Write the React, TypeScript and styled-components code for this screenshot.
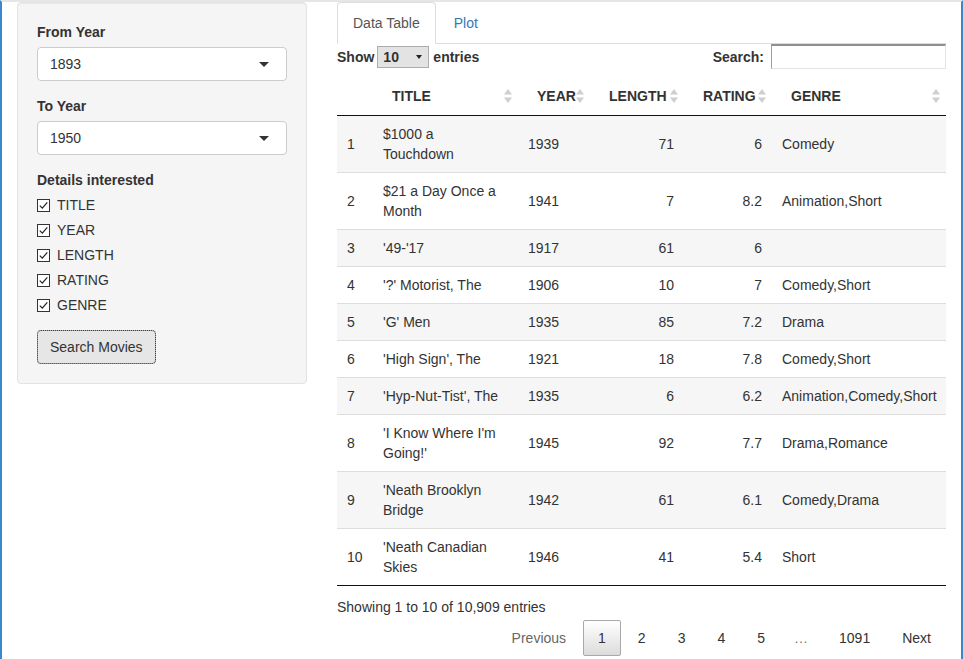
import React from "react";
import styled, { createGlobalStyle } from "styled-components";

const GlobalStyle = createGlobalStyle`
  html, body { margin: 0; padding: 0; background: #fff; }
  body {
    font-family: "Liberation Sans", Arial, Helvetica, sans-serif;
    font-size: 14px;
    line-height: 20px;
    color: #333;
  }
  * { box-sizing: border-box; }
`;

const Frame = styled.div`
  width: 963px;
  height: 659px;
  overflow: hidden;
  display: flex;
  align-items: flex-start;
  border-left: 2px solid #3c87cc;
  border-right: 2px solid #3c87cc;
  border-top: 2px solid #e6e6e6;
`;

const SideCol = styled.div`
  width: 320px;
  flex: none;
  padding: 0 15px;
`;

const MainCol = styled.div`
  flex: 1;
  min-width: 0;
  padding: 0 15px;
`;

const Well = styled.div`
  background: #f5f5f5;
  border: 1px solid #e3e3e3;
  border-radius: 4px;
  padding: 19px;
  box-shadow: inset 0 1px 1px rgba(0, 0, 0, 0.05);
`;

const FormGroup = styled.div`
  margin-bottom: 15px;
`;

const Label = styled.div`
  display: block;
  font-weight: 700;
  margin-bottom: 5px;
`;

const SelectBox = styled.div`
  height: 34px;
  background: #fff;
  border: 1px solid #ccc;
  border-radius: 4px;
  padding: 0 17px 0 12px;
  display: flex;
  align-items: center;
  justify-content: space-between;
`;

const Caret = styled.span`
  width: 0;
  height: 0;
  border-left: 5px solid transparent;
  border-right: 5px solid transparent;
  border-top: 5px solid #333;
  margin-top: 1px;
`;

const Options = styled.div`
  display: flex;
  flex-direction: column;
  gap: 5px;
`;

const OptionRow = styled.div`
  display: flex;
  align-items: center;
  height: 20px;
`;

const Box = styled.span`
  width: 13px;
  height: 13px;
  border: 1px solid #333;
  background: #fff;
  margin-right: 7px;
  display: flex;
  align-items: center;
  justify-content: center;
`;

const Button = styled.div`
  display: inline-flex;
  align-items: center;
  height: 34px;
  padding: 0 12px;
  background: #e6e6e6;
  border: 1px solid #adadad;
  border-radius: 4px;
  outline: 1px dotted #444;
  outline-offset: -1px;
  color: #333;
`;

const Tabs = styled.div`
  display: flex;
  border-bottom: 1px solid #ddd;
`;

const Tab = styled.div<{ $active?: boolean }>`
  padding: 10px 15px;
  margin-right: 2px;
  margin-bottom: -1px;
  border: 1px solid transparent;
  border-radius: 4px 4px 0 0;
  color: ${(p) => (p.$active ? "#555" : "#337ab7")};
  ${(p) =>
    p.$active
      ? `border-color: #ddd #ddd transparent; background: #fff;`
      : ``}
`;

const Controls = styled.div`
  display: flex;
  justify-content: space-between;
  align-items: center;
  height: 25px;
`;

const BoldLabel = styled.div`
  display: flex;
  align-items: center;
  font-weight: 700;
`;

const LenSelect = styled.div`
  width: 52px;
  height: 22px;
  margin: 1px 4px 0 3px;
  background: #e3e3e3;
  border: 1px solid #adadad;
  display: flex;
  align-items: center;
  justify-content: space-between;
  padding: 0 6px 0 5px;
  font-weight: 700;
`;

const SmallCaret = styled.span`
  width: 0;
  height: 0;
  border-left: 3.5px solid transparent;
  border-right: 3.5px solid transparent;
  border-top: 4px solid #222;
`;

const SearchInput = styled.div`
  width: 175px;
  height: 25px;
  margin-left: 7px;
  background: #fff;
  border-top: 2px solid #8f8f8f;
  border-left: 1px solid #a0a0a0;
  border-right: 1px solid #e3e3e3;
  border-bottom: 1px solid #e3e3e3;
`;

const Table = styled.table`
  width: 609px;
  margin-top: 9px;
  table-layout: fixed;
  border-collapse: separate;
  border-spacing: 0;
`;

const Th = styled.th<{ $plain?: boolean }>`
  padding: ${(p) => (p.$plain ? "8px 10px 9px" : "8px 6px 9px 19px")};
  text-align: left;
  font-weight: 700;
  border-bottom: 1px solid #111;
  line-height: 20px;
`;

const HeadInner = styled.div`
  display: flex;
  align-items: center;
  justify-content: space-between;
`;

const Tr = styled.tr<{ $odd: boolean }>`
  background: ${(p) => (p.$odd ? "#f6f6f6" : "#fff")};
  &:first-child td {
    border-top: none;
  }
  &:last-child td {
    border-bottom: 1px solid #111;
  }
`;

const Td = styled.td<{ $right?: boolean }>`
  padding: 8px 10px;
  vertical-align: middle;
  line-height: 20px;
  border-top: 1px solid #ddd;
  text-align: ${(p) => (p.$right ? "right" : "left")};
`;

const Info = styled.div`
  padding-top: 11px;
`;

const Pager = styled.div`
  margin-top: 3px;
  display: flex;
  justify-content: flex-end;
  align-items: center;
`;

const PageBtn = styled.div<{ $current?: boolean; $disabled?: boolean }>`
  padding: 7px 14px;
  margin-left: 2px;
  border: 1px solid ${(p) => (p.$current ? "#a9a9a9" : "transparent")};
  border-radius: 2px;
  color: ${(p) => (p.$disabled ? "#666" : "#333")};
  background: ${(p) =>
    p.$current ? "linear-gradient(to bottom, #fff 0%, #dcdcdc 100%)" : "transparent"};
`;

const Ellipsis = styled.span`
  padding: 0 14px;
  color: #777;
`;

const SortIcon = () => (
  <svg width="8" height="14" viewBox="0 0 8 14">
    <path d="M4 0 L8 5.5 L0 5.5 Z" fill="#cfcfcf" />
    <path d="M0 8.5 L8 8.5 L4 14 Z" fill="#cfcfcf" />
  </svg>
);

const Check = () => (
  <svg width="11" height="11" viewBox="0 0 11 11">
    <path d="M1.8 5.6 L4.3 8.2 L9.3 2.4" fill="none" stroke="#222" strokeWidth="1.2" />
  </svg>
);

const rows: [string, string, number, number, string, string][] = [
  ["1", "$1000 a Touchdown", 1939, 71, "6", "Comedy"],
  ["2", "$21 a Day Once a Month", 1941, 7, "8.2", "Animation,Short"],
  ["3", "'49-'17", 1917, 61, "6", ""],
  ["4", "'?' Motorist, The", 1906, 10, "7", "Comedy,Short"],
  ["5", "'G' Men", 1935, 85, "7.2", "Drama"],
  ["6", "'High Sign', The", 1921, 18, "7.8", "Comedy,Short"],
  ["7", "'Hyp-Nut-Tist', The", 1935, 6, "6.2", "Animation,Comedy,Short"],
  ["8", "'I Know Where I'm Going!'", 1945, 92, "7.7", "Drama,Romance"],
  ["9", "'Neath Brooklyn Bridge", 1942, 61, "6.1", "Comedy,Drama"],
  ["10", "'Neath Canadian Skies", 1946, 41, "5.4", "Short"],
];

const options = ["TITLE", "YEAR", "LENGTH", "RATING", "GENRE"];
const headers = ["TITLE", "YEAR", "LENGTH", "RATING", "GENRE"];
const widths = [36, 145, 72, 94, 88, 174];

export default function App() {
  return (
    <>
      <GlobalStyle />
      <Frame>
        <SideCol>
          <Well>
            <FormGroup>
              <Label>From Year</Label>
              <SelectBox>
                <span>1893</span>
                <Caret />
              </SelectBox>
            </FormGroup>
            <FormGroup>
              <Label>To Year</Label>
              <SelectBox>
                <span>1950</span>
                <Caret />
              </SelectBox>
            </FormGroup>
            <FormGroup>
              <Label>Details interested</Label>
              <Options>
                {options.map((o) => (
                  <OptionRow key={o}>
                    <Box>
                      <Check />
                    </Box>
                    <span>{o}</span>
                  </OptionRow>
                ))}
              </Options>
            </FormGroup>
            <Button>Search Movies</Button>
          </Well>
        </SideCol>
        <MainCol>
          <Tabs>
            <Tab $active>Data Table</Tab>
            <Tab>Plot</Tab>
          </Tabs>
          <Controls>
            <BoldLabel>
              Show
              <LenSelect>
                <span>10</span>
                <SmallCaret />
              </LenSelect>
              entries
            </BoldLabel>
            <BoldLabel>
              Search:
              <SearchInput />
            </BoldLabel>
          </Controls>
          <Table>
            <colgroup>
              {widths.map((w, i) => (
                <col key={i} style={{ width: w }} />
              ))}
            </colgroup>
            <thead>
              <tr>
                <Th $plain />
                {headers.map((h) => (
                  <Th key={h}>
                    <HeadInner>
                      <span>{h}</span>
                      <SortIcon />
                    </HeadInner>
                  </Th>
                ))}
              </tr>
            </thead>
            <tbody>
              {rows.map((r, i) => (
                <Tr key={r[0]} $odd={i % 2 === 0}>
                  <Td>{r[0]}</Td>
                  <Td>{r[1]}</Td>
                  <Td>{r[2]}</Td>
                  <Td $right>{r[3]}</Td>
                  <Td $right>{r[4]}</Td>
                  <Td>{r[5]}</Td>
                </Tr>
              ))}
            </tbody>
          </Table>
          <Info>Showing 1 to 10 of 10,909 entries</Info>
          <Pager>
            <PageBtn $disabled>Previous</PageBtn>
            <PageBtn $current>1</PageBtn>
            <PageBtn>2</PageBtn>
            <PageBtn>3</PageBtn>
            <PageBtn>4</PageBtn>
            <PageBtn>5</PageBtn>
            <Ellipsis>…</Ellipsis>
            <PageBtn>1091</PageBtn>
            <PageBtn>Next</PageBtn>
          </Pager>
        </MainCol>
      </Frame>
    </>
  );
}
